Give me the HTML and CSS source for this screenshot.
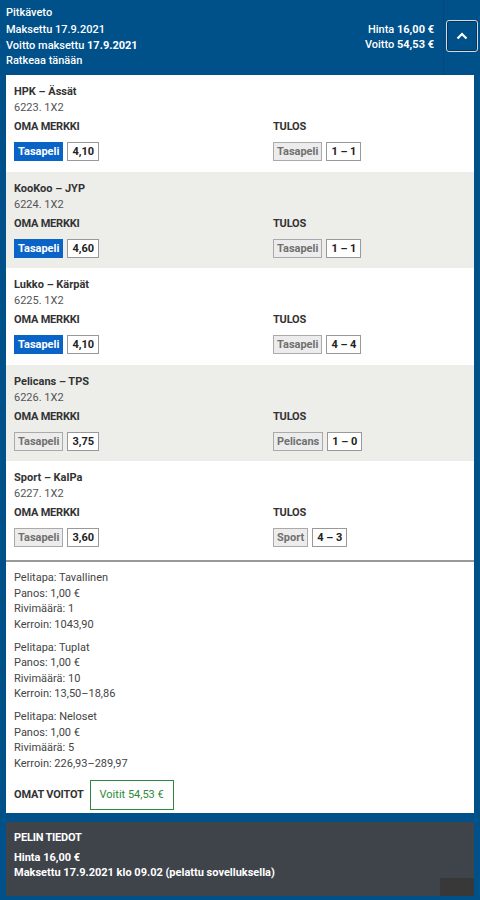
FILE: index.html
```html
<!DOCTYPE html>
<html lang="fi">
<head>
  <meta charset="UTF-8">
  <meta name="viewport" content="width=device-width, initial-scale=1.0">
  <title>Pitkäveto</title>
  <link rel="stylesheet" href="styles.css">
</head>
<body>
  <div class="page">
    <header class="kuponki-head">
      <div class="head-info">
        <p class="laji">Pitkäveto</p>
        <p>Maksettu 17.9.2021</p>
        <p>Voitto maksettu <b>17.9.2021</b></p>
        <p>Ratkeaa tänään</p>
      </div>
      <div class="head-summa">
        <p>Hinta <b>16,00 €</b></p>
        <p>Voitto <b>54,53 €</b></p>
      </div>
      <div class="head-toggle">
        <button class="toggle" aria-label="Sulje">
          <svg width="12" height="8" viewBox="0 0 12 8"><path d="M1.5 6.5 6 2l4.5 4.5" fill="none" stroke="#fff" stroke-width="2.2"/></svg>
        </button>
      </div>
    </header>

    <div class="kortti">
      <div class="kohde">
        <p class="ottelu">HPK – Ässät</p>
        <p class="kohde-nro">6223. 1X2</p>
        <div class="merkit">
          <div>
            <p class="otsikko">OMA MERKKI</p>
            <span class="merkki valittu">Tasapeli</span><span class="arvo">4,10</span>
          </div>
          <div>
            <p class="otsikko">TULOS</p>
            <span class="merkki">Tasapeli</span><span class="arvo">1 – 1</span>
          </div>
        </div>
      </div>
      <div class="kohde harmaa">
        <p class="ottelu">KooKoo – JYP</p>
        <p class="kohde-nro">6224. 1X2</p>
        <div class="merkit">
          <div>
            <p class="otsikko">OMA MERKKI</p>
            <span class="merkki valittu">Tasapeli</span><span class="arvo">4,60</span>
          </div>
          <div>
            <p class="otsikko">TULOS</p>
            <span class="merkki">Tasapeli</span><span class="arvo">1 – 1</span>
          </div>
        </div>
      </div>
      <div class="kohde">
        <p class="ottelu">Lukko – Kärpät</p>
        <p class="kohde-nro">6225. 1X2</p>
        <div class="merkit">
          <div>
            <p class="otsikko">OMA MERKKI</p>
            <span class="merkki valittu">Tasapeli</span><span class="arvo">4,10</span>
          </div>
          <div>
            <p class="otsikko">TULOS</p>
            <span class="merkki">Tasapeli</span><span class="arvo">4 – 4</span>
          </div>
        </div>
      </div>
      <div class="kohde harmaa">
        <p class="ottelu">Pelicans – TPS</p>
        <p class="kohde-nro">6226. 1X2</p>
        <div class="merkit">
          <div>
            <p class="otsikko">OMA MERKKI</p>
            <span class="merkki">Tasapeli</span><span class="arvo">3,75</span>
          </div>
          <div>
            <p class="otsikko">TULOS</p>
            <span class="merkki">Pelicans</span><span class="arvo">1 – 0</span>
          </div>
        </div>
      </div>
      <div class="kohde">
        <p class="ottelu">Sport – KalPa</p>
        <p class="kohde-nro">6227. 1X2</p>
        <div class="merkit">
          <div>
            <p class="otsikko">OMA MERKKI</p>
            <span class="merkki">Tasapeli</span><span class="arvo">3,60</span>
          </div>
          <div>
            <p class="otsikko">TULOS</p>
            <span class="merkki">Sport</span><span class="arvo">4 – 3</span>
          </div>
        </div>
      </div>

      <div class="yhteenveto">
        <div class="pelitapa">
          <p>Pelitapa: Tavallinen</p>
          <p>Panos: 1,00 €</p>
          <p>Rivimäärä: 1</p>
          <p>Kerroin: 1043,90</p>
        </div>
        <div class="pelitapa">
          <p>Pelitapa: Tuplat</p>
          <p>Panos: 1,00 €</p>
          <p>Rivimäärä: 10</p>
          <p>Kerroin: 13,50–18,86</p>
        </div>
        <div class="pelitapa">
          <p>Pelitapa: Neloset</p>
          <p>Panos: 1,00 €</p>
          <p>Rivimäärä: 5</p>
          <p>Kerroin: 226,93–289,97</p>
        </div>
        <div class="voitot">
          <span class="otsikko">OMAT VOITOT</span>
          <span class="voitto-laatikko">Voitit 54,53 €</span>
        </div>
      </div>
    </div>

    <div class="tiedot">
      <p class="otsikko">PELIN TIEDOT</p>
      <p>Hinta 16,00 €</p>
      <p>Maksettu 17.9.2021 klo 09.02 (pelattu sovelluksella)</p>
      <div class="nurkka"></div>
    </div>
  </div>
</body>
</html>
```

FILE: styles.css
```css
* { margin: 0; padding: 0; box-sizing: border-box; }
body {
  font-family: Roboto, "Liberation Sans", sans-serif;
  background: #00508a;
  color: #333;
  font-size: 11px;
}
.page {
  padding: 0 6px 5px;
  min-height: 900px;
}
.kuponki-head {
  display: flex;
  color: #fff;
  font-weight: 500;
  line-height: 15.5px;
  height: 75px;
}
.kuponki-head b { font-weight: bold; }
.head-info {
  flex: 1;
  padding-top: 5px;
}
.head-info .laji { margin-bottom: 1.5px; }
.head-summa {
  text-align: right;
  padding-top: 21.5px;
  padding-right: 9px;
}
.head-toggle {
  width: 37px;
  margin-right: -6px;
  border-left: 1px solid #0a4677;
  padding: 20px 0 0 2px;
}
.toggle {
  width: 32px;
  height: 32px;
  background: #00508a;
  border: 1px solid #d0dae4;
  border-radius: 3px;
  box-shadow: inset 0 0 0 1px #06365c;
  display: flex;
  align-items: center;
  justify-content: center;
}
.kortti {
  background: #fff;
}
.kohde {
  height: 96.5px;
  padding: 9px 8px 0;
}
.kohde:nth-child(5) { height: 99px; }
.kohde.harmaa { background: #ededea; }
.ottelu {
  font-weight: bold;
  line-height: 16px;
}
.kohde-nro {
  color: #555;
  line-height: 16px;
}
.otsikko {
  font-weight: bold;
  text-transform: uppercase;
  line-height: 19px;
  color: #333;
  letter-spacing: -0.2px;
}
.merkit {
  display: grid;
  grid-template-columns: 259px 1fr;
  margin-top: 1px;
}
.merkit p { margin-bottom: 6px; }
.merkki, .arvo {
  display: inline-block;
  height: 19px;
  line-height: 17px;
  padding: 0 3px;
  border: 1px solid #aaa;
  font-weight: bold;
  vertical-align: top;
}
.merkki {
  background: #ececec;
  color: #707070;
  margin-right: 4px;
}
.merkki.valittu {
  background: #0a64c8;
  border-color: #0a64c8;
  color: #fff;
}
.arvo {
  background: #fff;
  color: #222;
  border-color: #999;
  padding: 0 4px;
}
.yhteenveto {
  border-top: 2px solid #999;
  padding: 8px 8px 3px;
  color: #444;
}
.pelitapa {
  line-height: 15.5px;
  margin-bottom: 7.5px;
}
.voitot {
  display: flex;
  align-items: center;
  gap: 6px;
  padding-top: 1px;
}
.voitto-laatikko {
  border: 1px solid #2a8a3a;
  color: #2a8a3a;
  padding: 0 9px;
  line-height: 28px;
}
.tiedot {
  position: relative;
  margin-top: 9px;
  background: #3f444b;
  color: #fff;
  font-weight: bold;
  padding: 8px 8px 20px;
  line-height: 15.5px;
  height: 74px;
}
.tiedot .otsikko {
  color: #fff;
  margin-bottom: 4px;
  line-height: 16px;
}
.nurkka {
  position: absolute;
  right: 0;
  bottom: 0;
  width: 34px;
  height: 18px;
  background: #383838;
}
```
